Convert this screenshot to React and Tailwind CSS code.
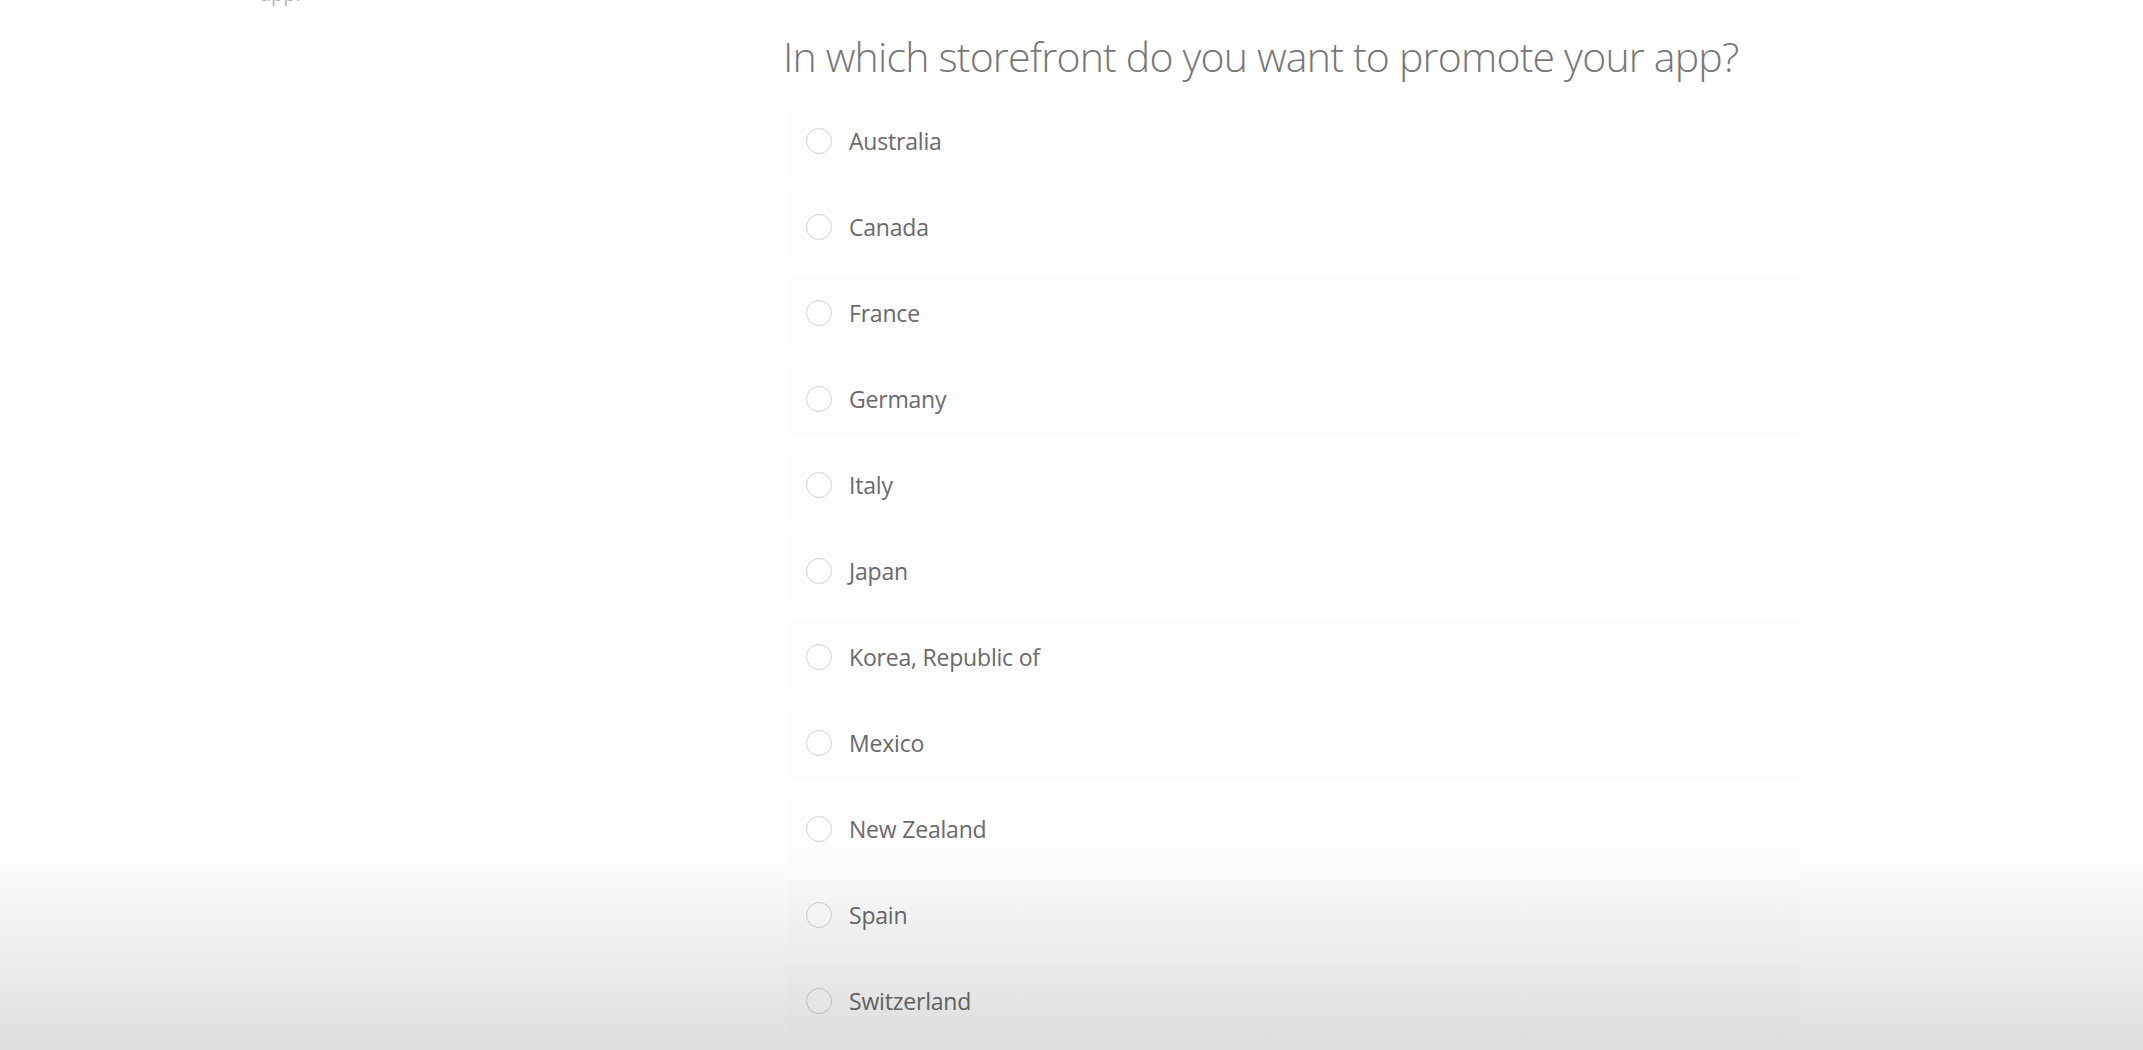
import React from 'react';

const storefronts = [
  'Australia',
  'Canada',
  'France',
  'Germany',
  'Italy',
  'Japan',
  'Korea, Republic of',
  'Mexico',
  'New Zealand',
  'Spain',
  'Switzerland',
];

export default function App() {
  return (
    <div className="relative w-full h-[1050px] overflow-hidden bg-white font-['Open_Sans',sans-serif]">
      <div className="flex">
        {/* Sidebar note (clipped at top) */}
        <div className="w-[786px] shrink-0 pl-[260px]">
          <p className="-mt-[18px] text-[20px] leading-[24px] text-[#b5b5b5]">app.</p>
        </div>

        {/* Storefront picker */}
        <div className="w-[1014px] shrink-0">
          <h1 className="mt-[28px] -ml-[3px] text-[41px] leading-[56px] font-light text-[#777] tracking-[-0.8px]">
            In which storefront do you want to promote your app?
          </h1>
          <div className="mt-[21px] flex flex-col gap-[14px]">
            {storefronts.map((name) => (
              <label key={name}
                className="flex items-center h-[72px] bg-[#fdfdfd] rounded-[3px] pl-[20px]">
                <span className="w-[26px] h-[26px] rounded-full border-[1.5px] border-[#d2d2d2] bg-white shrink-0" />
                <span className="ml-[17px] text-[23px] text-[#6a6a6a] tracking-[-0.2px]">{name}</span>
              </label>
            ))}
          </div>
        </div>
      </div>

      {/* Bottom fade overlay */}
      <div className="pointer-events-none absolute left-0 right-0 bottom-0 h-[205px] bg-gradient-to-b from-transparent to-[rgba(0,0,0,0.13)]" />
    </div>
  );
}
